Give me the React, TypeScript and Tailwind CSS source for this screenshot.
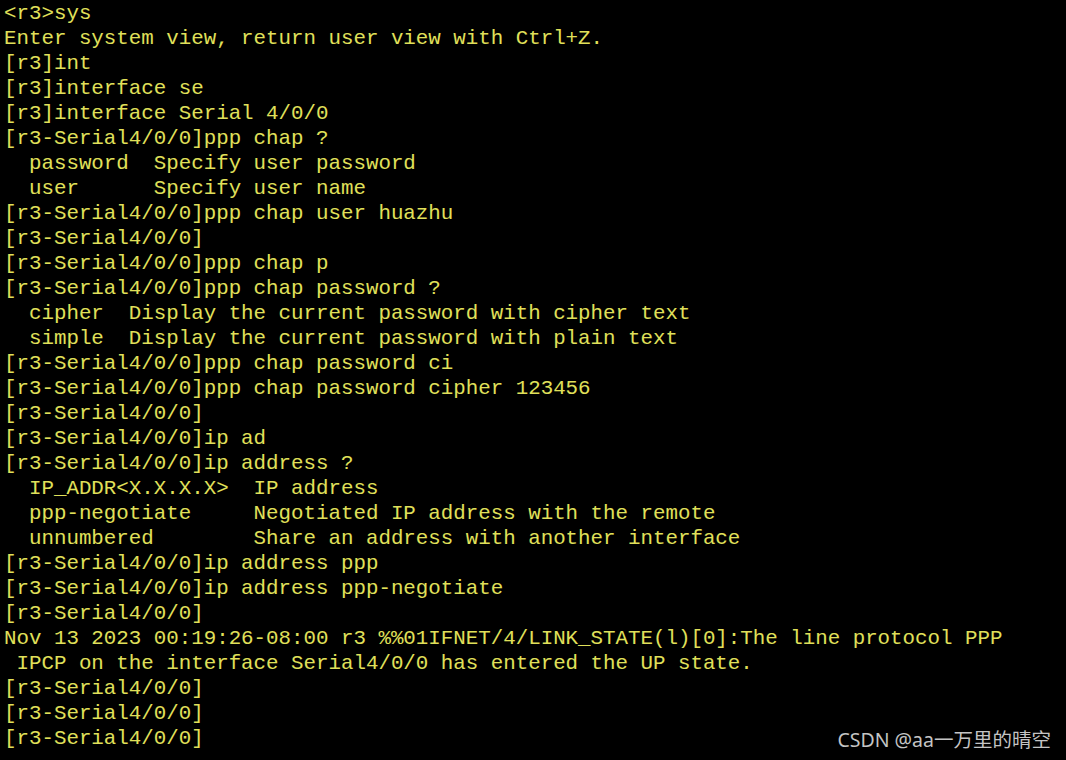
import React from "react";

const lines = [
  "<r3>sys",
  "Enter system view, return user view with Ctrl+Z.",
  "[r3]int",
  "[r3]interface se",
  "[r3]interface Serial 4/0/0",
  "[r3-Serial4/0/0]ppp chap ?",
  "  password  Specify user password",
  "  user      Specify user name",
  "[r3-Serial4/0/0]ppp chap user huazhu",
  "[r3-Serial4/0/0]",
  "[r3-Serial4/0/0]ppp chap p",
  "[r3-Serial4/0/0]ppp chap password ?",
  "  cipher  Display the current password with cipher text",
  "  simple  Display the current password with plain text",
  "[r3-Serial4/0/0]ppp chap password ci",
  "[r3-Serial4/0/0]ppp chap password cipher 123456",
  "[r3-Serial4/0/0]",
  "[r3-Serial4/0/0]ip ad",
  "[r3-Serial4/0/0]ip address ?",
  "  IP_ADDR<X.X.X.X>  IP address",
  "  ppp-negotiate     Negotiated IP address with the remote",
  "  unnumbered        Share an address with another interface",
  "[r3-Serial4/0/0]ip address ppp",
  "[r3-Serial4/0/0]ip address ppp-negotiate",
  "[r3-Serial4/0/0]",
  "Nov 13 2023 00:19:26-08:00 r3 %%01IFNET/4/LINK_STATE(l)[0]:The line protocol PPP",
  " IPCP on the interface Serial4/0/0 has entered the UP state.",
  "[r3-Serial4/0/0]",
  "[r3-Serial4/0/0]",
  "[r3-Serial4/0/0]",
];

export default function App() {
  return (
    <div className="relative w-[1066px] h-[760px] overflow-hidden bg-black">
      <div className="pl-[4px] pt-[1px] font-['Liberation_Mono','Courier_New',monospace] text-[20.8px] leading-[25px] text-[#e0e05a]">
        {lines.map((l, i) => (
          <div key={i} className="whitespace-pre h-[25px]">
            {l}
          </div>
        ))}
      </div>
      <div className="absolute right-[15px] bottom-[8px] font-['Noto_Sans','Noto_Sans_CJK_SC',sans-serif] text-[19.5px] leading-[24px] text-[#c4c4c4]">
        CSDN @aa一万里的晴空
      </div>
    </div>
  );
}
